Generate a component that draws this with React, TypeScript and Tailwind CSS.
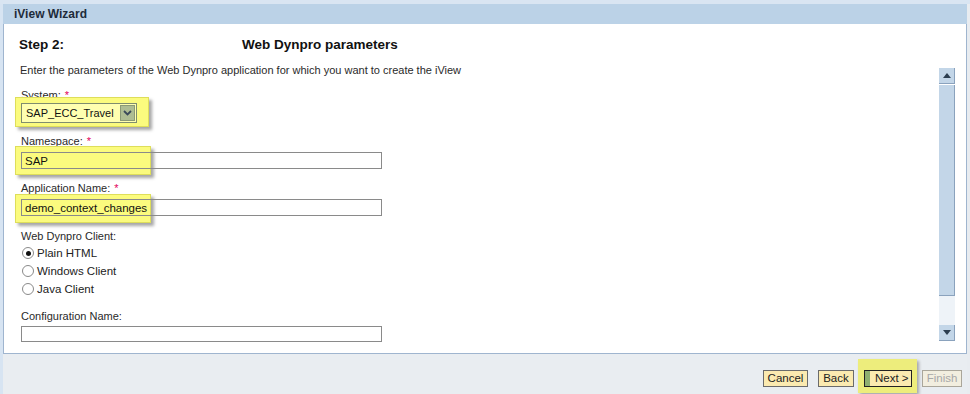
import { useState } from "react";

const font = { fontFamily: '"Liberation Sans", Arial, sans-serif' };

const Req = () => <span className="ml-[4px] text-[#e2005a]">*</span>;

// yellow annotation box drawn behind a field
const Highlight = ({ className }: { className: string }) => (
  <div
    className={`absolute bg-[#fbfb7e] border border-[#dede5a] shadow-[3px_3px_3px_rgba(0,0,0,0.35)] ${className}`}
  />
);

const Radio = ({ checked, label }: { checked?: boolean; label: string }) => (
  <div className="flex items-center h-[18px]">
    <span className="w-[12px] h-[12px] rounded-full border border-[#8a8a8a] bg-white flex items-center justify-center mr-[3px]">
      {checked && <span className="w-[5px] h-[5px] rounded-full bg-[#111]" />}
    </span>
    <span className="text-[11.5px] text-[#222]">{label}</span>
  </div>
);

const Button = ({
  label,
  width,
  disabled,
  focused,
}: {
  label: string;
  width: string;
  disabled?: boolean;
  focused?: boolean;
}) => (
  <div
    className={`${width} h-[17px] flex items-center whitespace-nowrap text-[11.5px] border ${
      disabled
        ? "bg-[#f2eedf] border-[#aaa69a] text-[#a8a8a8] justify-center"
        : focused
        ? "bg-[#fbeab0] border-[#222] text-[#222]"
        : "bg-[#fbeab0] border-[#6b6b6b] text-[#222] justify-center"
    }`}
  >
    {focused && <span className="w-[5px] self-stretch bg-[#8fb070] mr-[5px]" />}
    <span>{label}</span>
  </div>
);

export default function App() {
  const [client] = useState("html");
  return (
    <div className="w-[970px] h-[394px] bg-[#e9edf1] flex flex-col overflow-hidden" style={font}>
      <div className="h-[4px] bg-[#d9e5f2]" />
      <div className="flex flex-1">
        <div className="w-[3px] bg-[#d7e4f2]" />
        <div className="w-[964px] flex flex-col">
          <div className="h-[20px] bg-[#bbd2e7] pl-[11px] flex items-center text-[12px] font-bold text-[#1e2b3a]">
            iView Wizard
          </div>
          <div className="h-[330px] bg-white border-l border-r border-b border-[#9fb5cf] flex flex-col">
            <div className="flex pt-[13px] pl-[15px] h-[33px] text-[13.5px] font-bold text-[#111] leading-[16px]">
              <span className="w-[223px]">Step 2:</span>
              <span>Web Dynpro parameters</span>
            </div>
            <div className="flex flex-1 min-h-0">
              <div className="flex-1 pl-[16px] pt-[6px] text-[11px] leading-[14px] text-[#2a2a2a]">
                <div>Enter the parameters of the Web Dynpro application for which you want to create the iView</div>

                <div className="mt-[11px] pl-[1px]">
                  System:
                  <Req />
                </div>
                <div className="relative mt-[1px] h-[20px] w-[116px] ml-[1px]">
                  <Highlight className="-left-[6px] -top-[6px] w-[134px] h-[30px]" />
                  <div className="relative flex items-center h-[20px] w-[116px] border border-[#7f8d6e] bg-[#ffffb0]">
                    <span className="flex-1 pl-[4px] text-[11px] text-[#111]">SAP_ECC_Travel</span>
                    <span className="w-[15px] h-[16px] mr-[1px] bg-[#aebd93] border border-[#8b9a75] flex items-center justify-center">
                      <svg width="9" height="6" viewBox="0 0 9 6">
                        <path d="M1 1l3.5 3.5L8 1" fill="none" stroke="#3a4a5a" strokeWidth="1.8" />
                      </svg>
                    </span>
                  </div>
                </div>

                <div className="mt-[11px] pl-[1px]">
                  Namespace:
                  <Req />
                </div>
                <div className="relative mt-[4px] h-[17px] w-[361px] ml-[1px]">
                  <Highlight className="-left-[6px] -top-[6px] w-[136px] h-[29px]" />
                  <div className="relative h-[17px] w-[361px] border border-[#8a8a8a] pl-[3px] flex items-center text-[11.5px] text-[#111]">
                    SAP
                  </div>
                </div>

                <div className="mt-[12px] pl-[1px]">
                  Application Name:
                  <Req />
                </div>
                <div className="relative mt-[4px] h-[17px] w-[361px] ml-[1px]">
                  <Highlight className="-left-[6px] -top-[5px] w-[136px] h-[29px]" />
                  <div className="relative h-[17px] w-[361px] border border-[#8a8a8a] pl-[3px] flex items-center text-[11.5px] text-[#111]">
                    demo_context_changes
                  </div>
                </div>

                <div className="mt-[13px] pl-[1px]">Web Dynpro Client:</div>
                <div className="mt-[1px] pl-[2px]">
                  <Radio checked={client === "html"} label="Plain HTML" />
                  <Radio checked={client === "win"} label="Windows Client" />
                  <Radio checked={client === "java"} label="Java Client" />
                </div>

                <div className="mt-[11px] pl-[1px]">Configuration Name:</div>
                <div className="mt-[3px] h-[16px] w-[361px] ml-[1px] border border-[#8a8a8a]" />
              </div>

              {/* scrollbar */}
              <div className="w-[16px] mr-[11px] flex flex-col pt-[11px] pb-[12px]">
                <div className="h-[16px] bg-[#c3d6e8] border-r border-b border-[#8aa2bd] flex items-center justify-center">
                  <svg width="8" height="5" viewBox="0 0 8 5">
                    <path d="M0 5L4 0L8 5Z" fill="#2c3e50" />
                  </svg>
                </div>
                <div className="h-[211px] mt-[1px] bg-[#c3d6e8] border-r border-b border-[#8aa2bd]" />
                <div className="flex-1 bg-[#eef3f8]" />
                <div className="h-[16px] bg-[#c3d6e8] border-r border-b border-[#8aa2bd] flex items-center justify-center">
                  <svg width="8" height="5" viewBox="0 0 8 5">
                    <path d="M0 0L4 5L8 0Z" fill="#2c3e50" />
                  </svg>
                </div>
              </div>
            </div>
          </div>
          <div className="flex-1 flex items-start justify-end pr-[5px] pt-[16px] gap-[10px]">
            <Button label="Cancel" width="w-[45px]" />
            <Button label="Back" width="w-[36px]" />
            <div className="relative">
              <div className="absolute -left-[6px] -top-[11px] w-[59px] h-[34px] bg-[#eded7c] shadow-[2px_2px_3px_rgba(0,0,0,0.3)]" />
              <div className="relative">
                <Button label="Next >" width="w-[48px]" focused />
              </div>
            </div>
            <Button label="Finish" width="w-[40px]" disabled />
          </div>
        </div>
        <div className="flex-1 bg-[#e8ecf0]" />
      </div>
    </div>
  );
}
